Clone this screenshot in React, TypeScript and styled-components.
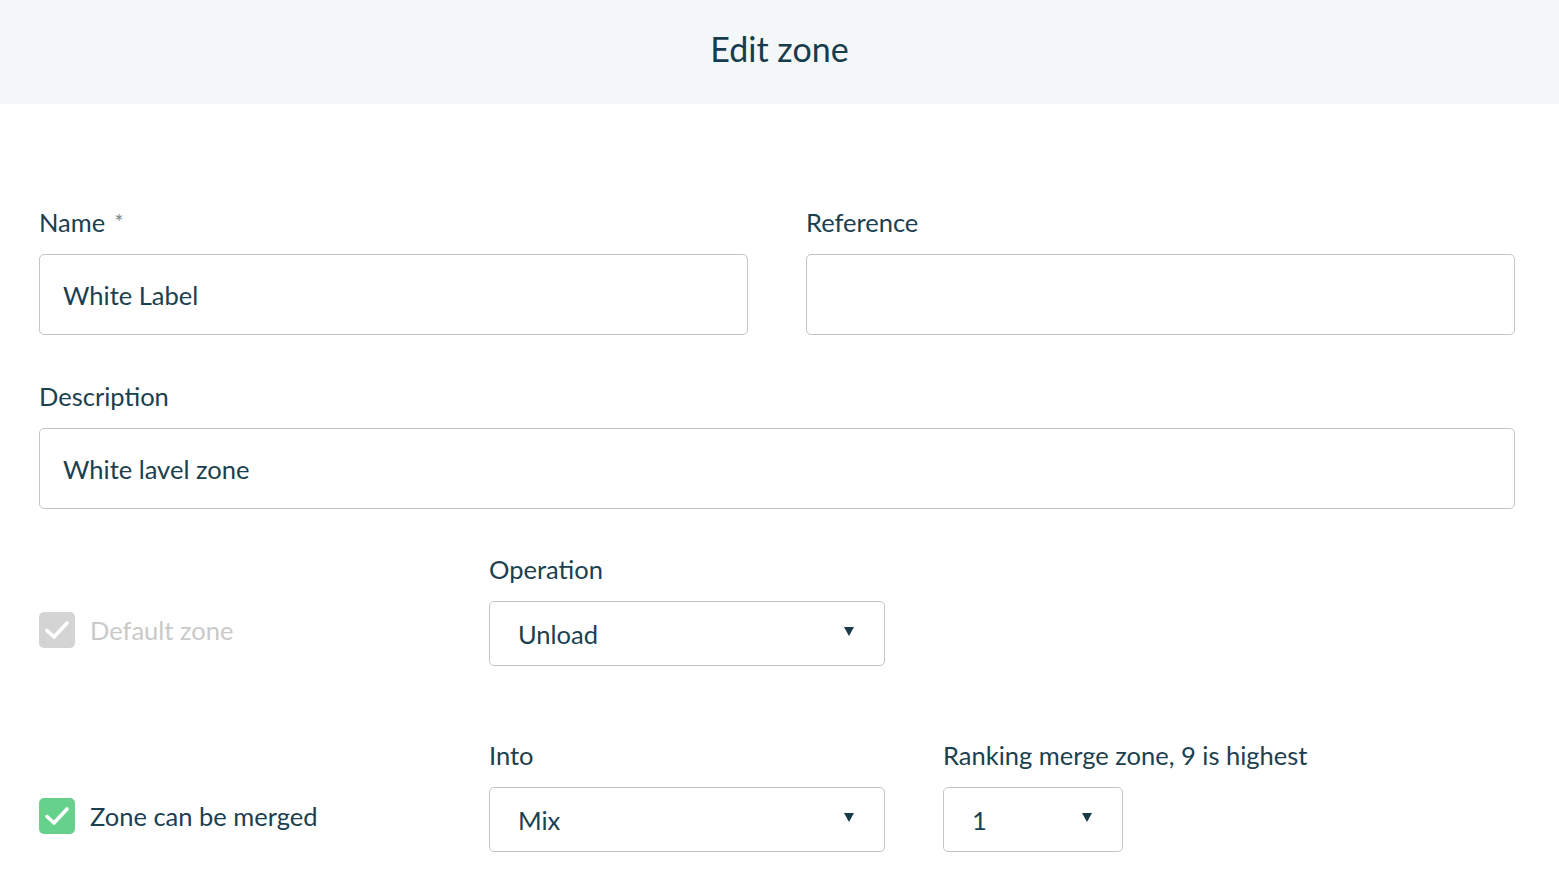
import styled, { createGlobalStyle } from "styled-components";

const GlobalStyle = createGlobalStyle`
  body {
    margin: 0;
    background: #ffffff;
    font-family: Lato, "Noto Sans", sans-serif;
    color: #1b4050;
  }
`;

const Header = styled.header`
  height: 104px;
  box-sizing: border-box;
  padding-bottom: 8px;
  background: #f3f7f7;
  display: flex;
  align-items: center;
  justify-content: center;
`;

const Title = styled.h1`
  margin: 0;
  font-size: 34px;
  font-weight: 400;
  color: #173c4c;
`;

const Form = styled.div`
  padding: 102px 44px 0 39px;
  display: flex;
  flex-direction: column;
`;

const Row = styled.div<{ $cols: string; $gap?: number; $mb?: number }>`
  display: grid;
  grid-template-columns: ${(p) => p.$cols};
  column-gap: ${(p) => p.$gap ?? 58}px;
  margin-bottom: ${(p) => p.$mb ?? 0}px;
  align-items: end;
`;

const Field = styled.div`
  display: flex;
  flex-direction: column;
`;

const Label = styled.label<{ $nowrap?: boolean }>`
  font-size: 25.5px;
  line-height: 32px;
  height: 32px;
  margin-bottom: 16px;
  color: #1b4050;
  white-space: ${(p) => (p.$nowrap ? "nowrap" : "normal")};
`;

const Star = styled.span`
  font-size: 22px;
  line-height: 0;
  color: #7a8a90;
  margin-left: 9px;
  position: relative;
  top: -2px;
`;

const Input = styled.div<{ $h?: number }>`
  height: ${(p) => p.$h ?? 81}px;
  box-sizing: border-box;
  border: 1px solid #c4c4c4;
  border-radius: 5px;
  padding: 0 23px;
  display: flex;
  align-items: center;
  font-size: 25.5px;
  color: #1b4050;
`;

const Select = styled(Input)`
  padding: 0 28px;
  justify-content: space-between;
`;

const Caret = styled.span`
  width: 0;
  height: 0;
  border-left: 5px solid transparent;
  border-right: 5px solid transparent;
  border-top: 9px solid #1b3a48;
  margin-top: -4px;
  margin-right: 2px;
`;

const CheckRow = styled.div<{ $muted?: boolean }>`
  display: flex;
  align-items: center;
  gap: 15px;
  height: 65px;
  margin-bottom: 4px;
  font-size: 25.5px;
  color: ${(p) => (p.$muted ? "#c9c9c9" : "#1b4050")};
`;

const Box = styled.span<{ $color: string }>`
  width: 36px;
  height: 36px;
  border-radius: 5px;
  background: ${(p) => p.$color};
  display: flex;
  align-items: center;
  justify-content: center;
`;

const Check = ({ color }: { color: string }) => (
  <Box $color={color}>
    <svg width="26" height="22" viewBox="0 0 26 22">
      <path d="M3 11.5 L10 18 L23 4" stroke="#fff" strokeWidth="3.6" fill="none" strokeLinecap="round" strokeLinejoin="round" />
    </svg>
  </Box>
);

export default function App() {
  return (
    <>
      <GlobalStyle />
      <Header>
        <Title>Edit zone</Title>
      </Header>
      <Form>
        <Row $cols="1fr 1fr" $mb={45}>
          <Field>
            <Label>
              Name<Star>*</Star>
            </Label>
            <Input>White Label</Input>
          </Field>
          <Field>
            <Label>Reference</Label>
            <Input />
          </Field>
        </Row>
        <Row $cols="1fr" $mb={44}>
          <Field>
            <Label>Description</Label>
            <Input>White lavel zone</Input>
          </Field>
        </Row>
        <Row $cols="450px 396px" $gap={0} $mb={73}>
          <CheckRow $muted>
            <Check color="#d4d4d4" />
            Default zone
          </CheckRow>
          <Field>
            <Label>Operation</Label>
            <Select $h={65}>
              Unload
              <Caret />
            </Select>
          </Field>
        </Row>
        <Row $cols="450px 396px 58px 180px" $gap={0}>
          <CheckRow>
            <Check color="#66d18a" />
            Zone can be merged
          </CheckRow>
          <Field>
            <Label>Into</Label>
            <Select $h={65}>
              Mix
              <Caret />
            </Select>
          </Field>
          <span />
          <Field>
            <Label $nowrap>Ranking merge zone, 9 is highest</Label>
            <Select $h={65}>
              1
              <Caret />
            </Select>
          </Field>
        </Row>
      </Form>
    </>
  );
}
